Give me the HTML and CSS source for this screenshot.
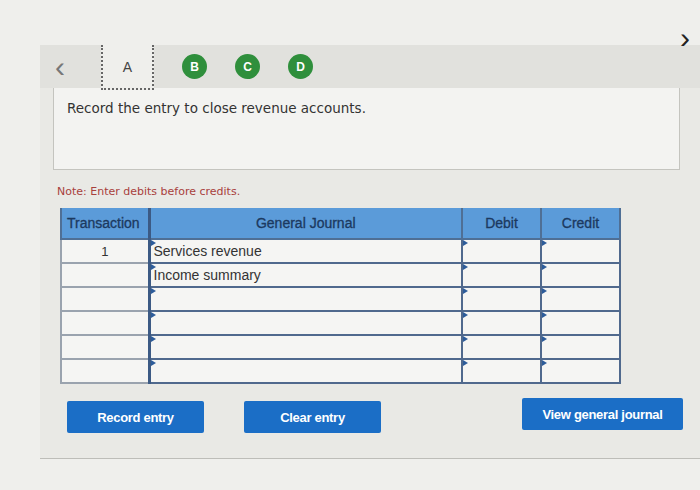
FILE: index.html
```html
<!DOCTYPE html>
<html>
<head>
  <title>Journal entry</title>
  <link rel="stylesheet" href="styles.css">
</head>
<body>

<div class="topline">
  <span class="nav-next">&#8250;</span>
</div>

<div class="widget">
  <div class="tabs">
    <span class="nav-prev">&#8249;</span>
    <div class="tab current">A</div>
    <div class="dot">B</div>
    <div class="dot">C</div>
    <div class="dot">D</div>
  </div>

  <div class="question">Record the entry to close revenue accounts.</div>

  <div class="note">Note: Enter debits before credits.</div>

  <table class="journal">
    <colgroup>
      <col class="c-trans">
      <col class="c-acct">
      <col class="c-num">
      <col class="c-num">
    </colgroup>
    <tr>
      <th class="c-trans">Transaction</th>
      <th class="c-acct">General Journal</th>
      <th class="c-num">Debit</th>
      <th class="c-num">Credit</th>
    </tr>
    <tr>
      <td class="c-trans">1</td>
      <td class="c-acct"><span class="flag"></span>Services revenue</td>
      <td class="c-num"><span class="flag"></span></td>
      <td class="c-num"><span class="flag"></span></td>
    </tr>
    <tr>
      <td class="c-trans"></td>
      <td class="c-acct"><span class="flag"></span>Income summary</td>
      <td class="c-num"><span class="flag"></span></td>
      <td class="c-num"><span class="flag"></span></td>
    </tr>
    <tr>
      <td class="c-trans"></td>
      <td class="c-acct"><span class="flag"></span></td>
      <td class="c-num"><span class="flag"></span></td>
      <td class="c-num"><span class="flag"></span></td>
    </tr>
    <tr>
      <td class="c-trans"></td>
      <td class="c-acct"><span class="flag"></span></td>
      <td class="c-num"><span class="flag"></span></td>
      <td class="c-num"><span class="flag"></span></td>
    </tr>
    <tr>
      <td class="c-trans"></td>
      <td class="c-acct"><span class="flag"></span></td>
      <td class="c-num"><span class="flag"></span></td>
      <td class="c-num"><span class="flag"></span></td>
    </tr>
    <tr>
      <td class="c-trans"></td>
      <td class="c-acct"><span class="flag"></span></td>
      <td class="c-num"><span class="flag"></span></td>
      <td class="c-num"><span class="flag"></span></td>
    </tr>
  </table>

  <div class="buttons">
    <button class="btn">Record entry</button>
    <button class="btn">Clear entry</button>
    <button class="btn wide">View general journal</button>
  </div>
</div>

</body>
</html>
```

FILE: styles.css
```css
body {
  margin: 0;
  background-color: #efefec;
  font-family: 'DejaVu Sans', Verdana, sans-serif;
  color: #333;
  height: 490px;
  overflow: hidden;
}

.topline {
  height: 45px;
  position: relative;
}

.nav-next {
  position: absolute;
  right: 10px;
  top: 28px;
  font-size: 30px;
  line-height: 20px;
  color: #222;
  font-family: 'Liberation Sans', sans-serif;
}

.widget {
  margin-left: 40px;
  height: 413px;
  background-color: #e9e9e5;
  border-bottom: 1px solid #bdbdb8;
}

.tabs {
  display: flex;
  align-items: center;
  height: 43px;
  background-color: #e1e1dd;
}

.nav-prev {
  font-family: 'Liberation Sans', sans-serif;
  font-size: 30px;
  line-height: 20px;
  color: #777;
  margin-left: 15px;
  width: 46px;
}

.tab {
  width: 53px;
  height: 43px;
  display: flex;
  align-items: center;
  justify-content: center;
  font-family: 'Liberation Sans', sans-serif;
  font-size: 14px;
  color: #444;
}

.tab.current {
  background-color: #efefec;
  border-left: 2px dotted #666;
  border-right: 2px dotted #666;
  border-bottom: 2px dotted #666;
  box-sizing: border-box;
  height: 45px;
  margin-top: 2px;
}

.dot {
  width: 25px;
  height: 25px;
  border-radius: 50%;
  background-color: #2f8f3c;
  color: #fff;
  font-family: 'Liberation Sans', sans-serif;
  font-weight: bold;
  font-size: 12px;
  display: flex;
  align-items: center;
  justify-content: center;
  margin-left: 28px;
}

.dot:first-of-type {
  margin-left: 25px;
}

.question {
  margin-left: 13px;
  width: 627px;
  height: 82px;
  box-sizing: border-box;
  background-color: #f3f3f1;
  border: 1px solid #c4c4bf;
  border-top: none;
  padding: 12px 0 0 13px;
  font-size: 13.5px;
  color: #333;
}

.note {
  margin: 15px 0 0 17px;
  font-size: 11px;
  color: #a8403c;
}

.journal {
  margin: 10px 0 0 20px;
  border-collapse: collapse;
  font-family: 'Liberation Sans', sans-serif;
  font-size: 14px;
  table-layout: fixed;
  width: 559px;
}

col.c-trans { width: 88px; }
col.c-acct { width: 313px; }
col.c-num { width: 79px; }

.journal th {
  background-color: #5b9bd9;
  color: #1c3960;
  font-weight: normal;
  -webkit-text-stroke: 0.3px #1c3960;
  height: 30px;
  border: 2px solid #4f6f95;
  border-top: none;
  padding: 0;
}

.journal th.c-trans {
  text-align: left;
  padding-left: 5px;
}

.journal td {
  height: 22px;
  border: 2px solid #50698d;
  background-color: #f5f5f3;
  padding: 0 0 0 3px;
  color: #333;
  position: relative;
}

.journal td.c-trans {
  border-color: #9aa3ae;
  text-align: center;
  padding: 0;
  font-size: 13px;
}

.journal td.c-acct,
.journal th.c-acct {
  border-left: 3px solid #3c5a84;
}

.flag {
  position: absolute;
  left: 0;
  top: 0;
  width: 0;
  height: 0;
  border-top: 3px solid transparent;
  border-bottom: 3px solid transparent;
  border-left: 5px solid #2d5c9a;
}

.buttons {
  display: flex;
  align-items: flex-start;
  margin: 17px 0 0 27px;
}

.btn {
  background-color: #1b6ec6;
  color: #fff;
  border: none;
  border-radius: 2px;
  font-family: 'Liberation Sans', sans-serif;
  font-weight: bold;
  font-size: 13px;
  letter-spacing: -0.3px;
  width: 137px;
  height: 32px;
  margin-right: 40px;
}

.btn.wide {
  width: 161px;
  margin-left: 101px;
  margin-top: -3px;
  margin-right: 0;
}
```
